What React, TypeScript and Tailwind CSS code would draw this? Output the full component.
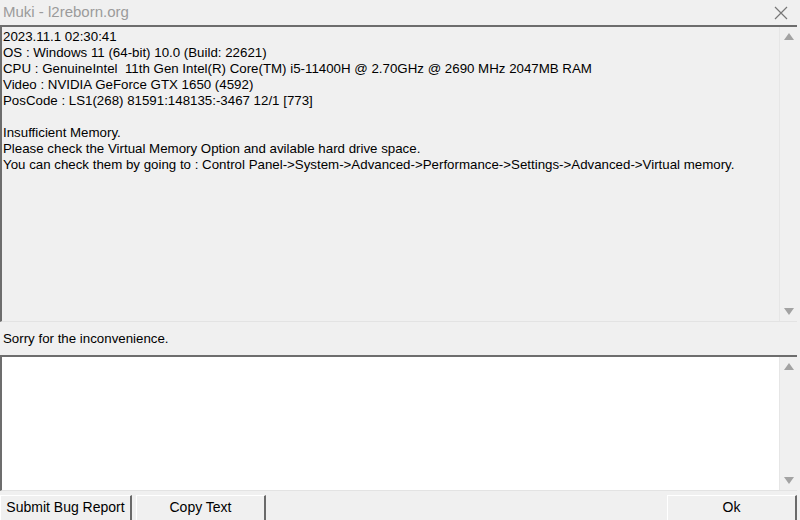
import React from 'react';

const FONT = { fontFamily: '"Liberation Sans", Arial, sans-serif' };

const LINES = [
  '2023.11.1 02:30:41',
  'OS : Windows 11 (64-bit) 10.0 (Build: 22621)',
  'CPU : GenuineIntel  11th Gen Intel(R) Core(TM) i5-11400H @ 2.70GHz @ 2690 MHz 2047MB RAM',
  'Video : NVIDIA GeForce GTX 1650 (4592)',
  'PosCode : LS1(268) 81591:148135:-3467 12/1 [773]',
  '',
  'Insufficient Memory.',
  'Please check the Virtual Memory Option and avilable hard drive space.',
  'You can check them by going to : Control Panel->System->Advanced->Performance->Settings->Advanced->Virtual memory.',
];

function ScrollBar({ bg }: { bg: string }) {
  return (
    <div className={`w-[18px] flex flex-col justify-between items-center py-[6px] border-l border-[#e6e6e6] ${bg}`}>
      <svg width="10" height="7" viewBox="0 0 10 7">
        <polygon points="5,0 10,7 0,7" fill="#a3a3a3" />
      </svg>
      <svg width="10" height="7" viewBox="0 0 10 7">
        <polygon points="0,0 10,0 5,7" fill="#a3a3a3" />
      </svg>
    </div>
  );
}

export default function App() {
  return (
    <div className="w-[800px] h-[520px] bg-[#f0f0f0] flex flex-col overflow-hidden text-black" style={FONT}>
      {/* Title bar */}
      <div className="h-[25px] flex items-center justify-between pl-[3px] pr-[12px]">
        <span className="text-[15px] text-[#9b9b9b]">Muki - l2reborn.org</span>
        <svg width="14" height="14" viewBox="0 0 14 14">
          <path d="M1 1 L13 13 M13 1 L1 13" stroke="#777" strokeWidth="1.2" />
        </svg>
      </div>

      {/* Info box */}
      <div className="h-[297px] flex mr-[3px] border-t-2 border-l-2 border-t-[#6d6d6d] border-l-[#6d6d6d] border-b border-b-[#e3e3e3]">
        <div className="flex-1 pl-[1px] pt-[2px] text-[13.3px] leading-[16px]">
          {LINES.map((l, i) => (
            <div key={i} className="h-[16px] whitespace-pre">{l}</div>
          ))}
        </div>
        <ScrollBar bg="bg-[#f0f0f0]" />
      </div>

      <div className="h-[33px] flex items-center pl-[3px] text-[13.3px]">Sorry for the inconvenience.</div>

      {/* Comment box */}
      <div className="h-[136px] flex mr-[3px] bg-white border-t-2 border-l-2 border-t-[#6d6d6d] border-l-[#6d6d6d] border-b border-b-[#e3e3e3]">
        <div className="flex-1" />
        <ScrollBar bg="bg-[#f0f0f0]" />
      </div>

      {/* Buttons */}
      <div className="flex-1 flex pt-[4px]">
        <button className="w-[132px] h-full bg-[#f0f0f0] border-t border-l border-[#ffffff] border-r-2 border-r-[#6a6a6a] text-[14px] pb-[1px]">
          Submit Bug Report
        </button>
        <div className="w-[4px]" />
        <button className="w-[130px] h-full bg-[#f0f0f0] border-t border-l border-[#ffffff] border-r-2 border-r-[#6a6a6a] text-[14px] pb-[1px]">
          Copy Text
        </button>
        <div className="flex-1" />
        <button className="w-[130px] h-full mr-[3px] bg-[#f0f0f0] border-t border-l border-[#ffffff] border-r-2 border-r-[#6a6a6a] text-[14px] pb-[1px]">
          Ok
        </button>
      </div>
    </div>
  );
}
